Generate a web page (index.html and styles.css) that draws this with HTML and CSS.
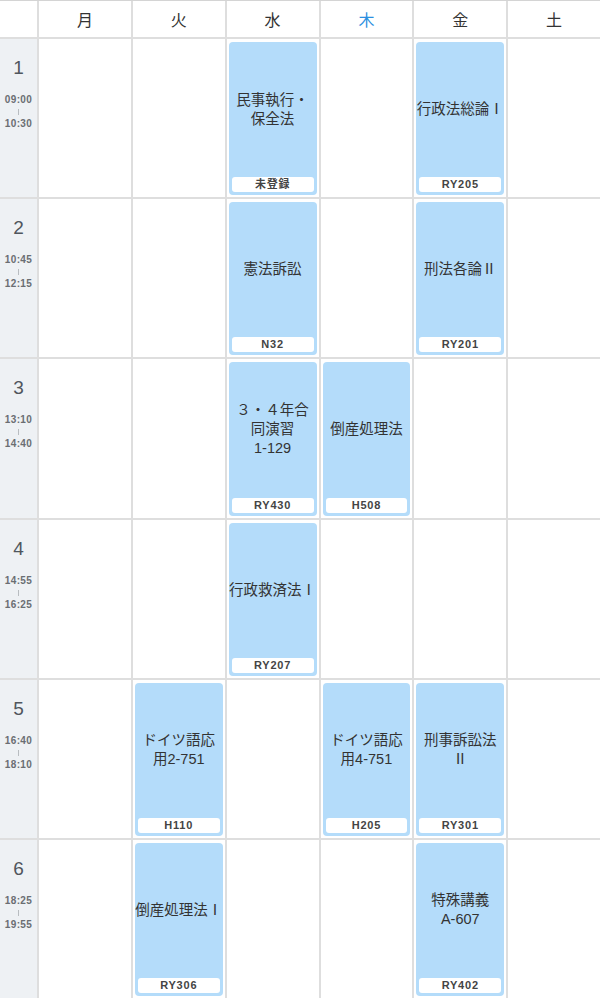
FILE: index.html
```html
<!DOCTYPE html>
<html lang="ja">
<head>
<meta charset="utf-8">
<title>時間割</title>
<link rel="stylesheet" href="styles.css">
</head>
<body>
<div class="timetable">
  <div class="head corner"></div>
  <div class="head">月</div>
  <div class="head">火</div>
  <div class="head">水</div>
  <div class="head today">木</div>
  <div class="head">金</div>
  <div class="head">土</div>

  <div class="period"><span class="num">1</span><span class="time">09:00</span><span class="tick"></span><span class="time">10:30</span></div>
  <div class="cell"></div>
  <div class="cell"></div>
  <div class="cell"><div class="card"><div class="title">民事執行・<br>保全法</div><div class="room">未登録</div></div></div>
  <div class="cell"></div>
  <div class="cell"><div class="card"><div class="title">行政法総論Ⅰ</div><div class="room">RY205</div></div></div>
  <div class="cell"></div>

  <div class="period"><span class="num">2</span><span class="time">10:45</span><span class="tick"></span><span class="time">12:15</span></div>
  <div class="cell"></div>
  <div class="cell"></div>
  <div class="cell"><div class="card"><div class="title">憲法訴訟</div><div class="room">N32</div></div></div>
  <div class="cell"></div>
  <div class="cell"><div class="card"><div class="title">刑法各論Ⅱ</div><div class="room">RY201</div></div></div>
  <div class="cell"></div>

  <div class="period"><span class="num">3</span><span class="time">13:10</span><span class="tick"></span><span class="time">14:40</span></div>
  <div class="cell"></div>
  <div class="cell"></div>
  <div class="cell"><div class="card"><div class="title">３・４年合<br>同演習<br>1-129</div><div class="room">RY430</div></div></div>
  <div class="cell"><div class="card"><div class="title">倒産処理法</div><div class="room">H508</div></div></div>
  <div class="cell"></div>
  <div class="cell"></div>

  <div class="period"><span class="num">4</span><span class="time">14:55</span><span class="tick"></span><span class="time">16:25</span></div>
  <div class="cell"></div>
  <div class="cell"></div>
  <div class="cell"><div class="card"><div class="title">行政救済法Ⅰ</div><div class="room">RY207</div></div></div>
  <div class="cell"></div>
  <div class="cell"></div>
  <div class="cell"></div>

  <div class="period"><span class="num">5</span><span class="time">16:40</span><span class="tick"></span><span class="time">18:10</span></div>
  <div class="cell"></div>
  <div class="cell"><div class="card"><div class="title">ドイツ語応<br>用2-751</div><div class="room">H110</div></div></div>
  <div class="cell"></div>
  <div class="cell"><div class="card"><div class="title">ドイツ語応<br>用4-751</div><div class="room">H205</div></div></div>
  <div class="cell"><div class="card"><div class="title">刑事訴訟法<br>Ⅱ</div><div class="room">RY301</div></div></div>
  <div class="cell"></div>

  <div class="period"><span class="num">6</span><span class="time">18:25</span><span class="tick"></span><span class="time">19:55</span></div>
  <div class="cell"></div>
  <div class="cell"><div class="card"><div class="title">倒産処理法Ⅰ</div><div class="room">RY306</div></div></div>
  <div class="cell"></div>
  <div class="cell"></div>
  <div class="cell"><div class="card"><div class="title">特殊講義<br>A-607</div><div class="room">RY402</div></div></div>
  <div class="cell"></div>
</div>
</body>
</html>
```

FILE: styles.css
```css
html, body {
  margin: 0;
  padding: 0;
  background: #ffffff;
}
body {
  font-family: "Liberation Sans", "Noto Sans CJK JP", sans-serif;
  color: #333;
}
.timetable {
  display: grid;
  grid-template-columns: 37px repeat(6, 1fr);
  grid-template-rows: 36px repeat(6, 1fr);
  gap: 2px;
  height: 997px;
  border-top: 1px solid #d4d4d4;
  background: #dedede;
}
.head {
  background: #ffffff;
  display: flex;
  align-items: center;
  justify-content: center;
  font-family: "Noto Sans CJK JP", sans-serif;
  font-size: 16px;
  color: #333;
}
.head.today {
  color: #2b8fe0;
}
.period {
  background: #eef1f4;
  display: flex;
  flex-direction: column;
  align-items: center;
  padding-top: 17px;
  box-sizing: border-box;
}
.num {
  font-size: 19px;
  line-height: 24px;
  color: #50565d;
  margin-bottom: 14px;
}
.time {
  font-size: 10px;
  line-height: 12px;
  font-weight: 700;
  color: #6a6e72;
  letter-spacing: 0.4px;
}
.tick {
  width: 1px;
  height: 6px;
  background: #b8bcc0;
  margin: 3px 0 3px;
}
.cell {
  background: #ffffff;
  display: flex;
  min-height: 0;
}
.card {
  flex: 1;
  margin: 3px 2px 2px 2px;
  background: #b4dcfa;
  border-radius: 4px;
  display: flex;
  flex-direction: column;
  min-width: 0;
}
.title {
  flex: 1;
  display: flex;
  align-items: center;
  justify-content: center;
  text-align: center;
  font-size: 14.5px;
  line-height: 19px;
  color: #333;
  white-space: nowrap;
}
.room {
  margin: 0 3px 3px 3px;
  height: 15px;
  background: #ffffff;
  border-radius: 3px;
  font-size: 11px;
  line-height: 15px;
  font-weight: 700;
  color: #444;
  text-align: center;
  letter-spacing: 0.8px;
}
```
